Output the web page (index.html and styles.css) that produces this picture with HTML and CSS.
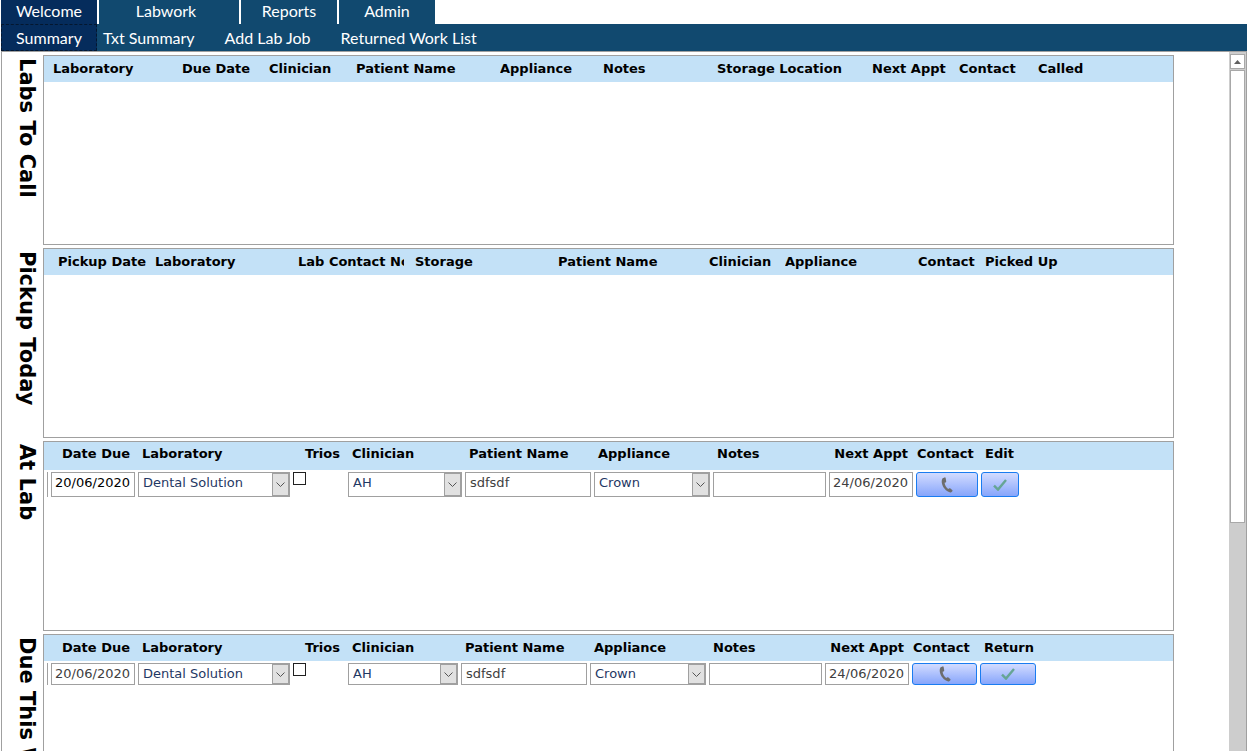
FILE: index.html
```html
<!DOCTYPE html>
<html lang="en">
<head>
  <meta charset="UTF-8">
  <meta name="viewport" content="width=device-width, initial-scale=1">
  <title>Labwork Summary</title>
  <link rel="stylesheet" href="styles.css">
</head>
<body>
  <svg width="0" height="0" class="symbols">
    <symbol id="phone" viewBox="0 0 12 16">
      <path d="M3.6 0.4 L1.6 1.2 C0 3.4 0.6 8 3.4 11.6 C5.6 14.4 8.2 15.8 10 15.4 L11.4 14.2 C11.7 13.8 11.6 13.4 11.2 13 L9.4 11.4 C9 11.1 8.5 11.1 8.1 11.4 L7.2 12 C5.2 10.6 3.8 8 3.6 5.8 L4.6 5.4 C5.1 5.2 5.3 4.8 5.2 4.3 L4.7 1.2 C4.6 0.6 4.2 0.2 3.6 0.4 Z" fill="#6d6d6d"/>
    </symbol>
    <symbol id="check" viewBox="0 0 14 12">
      <path d="M1 6.6 L5 10.6 L13 1" fill="none" stroke="#66a595" stroke-width="2.4"/>
    </symbol>
  </svg>

  <nav class="tabs">
    <button class="tab active">Welcome</button>
    <button class="tab wide">Labwork</button>
    <button class="tab">Reports</button>
    <button class="tab">Admin</button>
  </nav>
  <nav class="subtabs">
    <button class="subtab active">Summary</button>
    <button class="subtab">Txt Summary</button>
    <button class="subtab">Add Lab Job</button>
    <button class="subtab">Returned Work List</button>
  </nav>

  <main class="view">
    <div class="sections">
      <section class="section">
        <h2>Labs To Call</h2>
        <div class="panel">
          <table class="list">
            <colgroup>
              <col style="width:9px"><col style="width:129px"><col style="width:87px"><col style="width:87px"><col style="width:144px"><col style="width:103px"><col style="width:114px"><col style="width:155px"><col style="width:87px"><col style="width:79px"><col>
            </colgroup>
            <thead>
              <tr>
                <th></th><th>Laboratory</th><th>Due Date</th><th>Clinician</th><th>Patient Name</th><th>Appliance</th><th>Notes</th><th>Storage Location</th><th>Next Appt</th><th>Contact</th><th>Called</th>
              </tr>
            </thead>
          </table>
        </div>
      </section>

      <section class="section">
        <h2>Pickup Today</h2>
        <div class="panel">
          <table class="list">
            <colgroup>
              <col style="width:14px"><col style="width:97px"><col style="width:143px"><col style="width:106px"><col style="width:11px"><col style="width:143px"><col style="width:151px"><col style="width:76px"><col style="width:133px"><col style="width:67px"><col>
            </colgroup>
            <thead>
              <tr>
                <th></th><th>Pickup Date</th><th>Laboratory</th><th>Lab Contact No</th><th></th><th>Storage</th><th>Patient Name</th><th>Clinician</th><th>Appliance</th><th>Contact</th><th>Picked Up</th>
              </tr>
            </thead>
          </table>
        </div>
      </section>

      <section class="section">
        <h2>At Lab</h2>
        <div class="panel">
          <table class="list jobs tall">
            <colgroup>
              <col style="width:7px"><col style="width:87px"><col style="width:155px"><col style="width:55px"><col style="width:117px"><col style="width:129px"><col style="width:119px"><col style="width:116px"><col style="width:87px"><col style="width:65px"><col style="width:41px"><col>
            </colgroup>
            <thead>
              <tr>
                <th></th><th class="right">Date Due</th><th>Laboratory</th><th class="right">Trios</th><th>Clinician</th><th>Patient Name</th><th>Appliance</th><th>Notes</th><th class="right">Next Appt</th><th class="contact">Contact</th><th>Edit</th><th></th>
              </tr>
            </thead>
            <tbody>
              <tr>
                <td><div class="marker"></div></td>
                <td><input class="date current" type="text" value="20/06/2020" aria-label="Date Due"></td>
                <td><select aria-label="Laboratory"><option>Dental Solution</option></select></td>
                <td><input type="checkbox" aria-label="Trios"></td>
                <td><select aria-label="Clinician"><option>AH</option></select></td>
                <td><input type="text" value="sdfsdf" aria-label="Patient Name"></td>
                <td><select aria-label="Appliance"><option>Crown</option></select></td>
                <td><input type="text" aria-label="Notes"></td>
                <td><input class="date" type="text" value="24/06/2020" aria-label="Next Appt"></td>
                <td><button class="action" aria-label="Contact"><svg width="12" height="16"><use href="#phone"/></svg></button></td>
                <td><button class="action" aria-label="Edit"><svg width="14" height="12"><use href="#check"/></svg></button></td>
                <td></td>
              </tr>
            </tbody>
          </table>
        </div>
      </section>

      <section class="section">
        <h2>Due This Week</h2>
        <div class="panel">
          <table class="list jobs">
            <colgroup>
              <col style="width:7px"><col style="width:87px"><col style="width:155px"><col style="width:55px"><col style="width:113px"><col style="width:129px"><col style="width:119px"><col style="width:116px"><col style="width:87px"><col style="width:68px"><col style="width:59px"><col>
            </colgroup>
            <thead>
              <tr>
                <th></th><th class="right">Date Due</th><th>Laboratory</th><th class="right">Trios</th><th>Clinician</th><th>Patient Name</th><th>Appliance</th><th>Notes</th><th class="right">Next Appt</th><th class="contact">Contact</th><th>Return</th><th></th>
              </tr>
            </thead>
            <tbody>
              <tr>
                <td><div class="marker"></div></td>
                <td><input class="date" type="text" value="20/06/2020" aria-label="Date Due"></td>
                <td><select aria-label="Laboratory"><option>Dental Solution</option></select></td>
                <td><input type="checkbox" aria-label="Trios"></td>
                <td><select aria-label="Clinician"><option>AH</option></select></td>
                <td><input type="text" value="sdfsdf" aria-label="Patient Name"></td>
                <td><select aria-label="Appliance"><option>Crown</option></select></td>
                <td><input type="text" aria-label="Notes"></td>
                <td><input class="date" type="text" value="24/06/2020" aria-label="Next Appt"></td>
                <td><button class="action" aria-label="Contact"><svg width="12" height="16"><use href="#phone"/></svg></button></td>
                <td><button class="action" aria-label="Return"><svg width="14" height="12"><use href="#check"/></svg></button></td>
                <td></td>
              </tr>
            </tbody>
          </table>
        </div>
      </section>
    </div>

    <div class="scrollbar">
      <button class="scroll-up" aria-label="Scroll up"><svg width="7" height="4" viewBox="0 0 7 4"><path d="M0 4 L3.5 0 L7 4 Z" fill="#606060"/></svg></button>
      <div class="thumb"></div>
    </div>
  </main>
</body>
</html>
```

FILE: styles.css
```css
* {
  box-sizing: border-box;
}
body {
  display: flex;
  flex-direction: column;
  height: 100vh;
  margin: 0;
  padding: 0 8px 0 1px;
  overflow: hidden;
  background: white;
  color: black;
  font-family: Verdana, "DejaVu Sans", sans-serif;
  font-size: 13px;
}
.symbols {
  position: absolute;
}
button, input, select {
  margin: 0;
  font: inherit;
}

/* navigation */
.tabs {
  display: flex;
  flex: none;
  gap: 2px;
}
.subtabs {
  display: flex;
  flex: none;
  background: #11496f;
}
.tab, .subtab {
  border: 0;
  padding: 0;
  background: #11496f;
  color: white;
  font-family: Lato, "Century Gothic", sans-serif;
  font-size: 16px;
  line-height: 20px;
}
.tab {
  width: 96px;
  height: 24px;
  padding-bottom: 3px;
}
.tab.wide {
  width: 140px;
  padding-right: 6px;
}
.subtab {
  height: 27px;
  padding: 0 24px 0 6px;
}
.tab.active, .subtab.active {
  background: #052c5c;
}
.subtab.active {
  width: 96px;
  padding: 0;
  border: 1px dashed #04172f;
}

/* scrolling view */
.view {
  display: flex;
  flex: 1;
  min-height: 0;
  border: 1px solid #a0a0a0;
  border-bottom: 0;
}
.sections {
  display: flex;
  flex: 1;
  flex-direction: column;
  gap: 3px;
  padding: 3px 55px 0 0;
  overflow: hidden;
}
.section {
  display: flex;
  flex: none;
}
h2 {
  width: 41px;
  height: 189px;
  margin: 0;
  padding: 3px 4px 0 0;
  font-size: 21px;
  line-height: 24px;
  white-space: nowrap;
  writing-mode: vertical-rl;
}
.panel {
  flex: 1;
  min-height: 190px;
  border: 1px solid #a0a0a0;
}

/* lists */
.list {
  width: 100%;
  table-layout: fixed;
  border-collapse: collapse;
}
th {
  height: 26px;
  padding: 0 0 1px;
  overflow: hidden;
  background: #c3e1f7;
  text-align: left;
  line-height: 16px;
  white-space: nowrap;
}
.jobs th {
  padding-left: 4px;
}
.jobs th.contact {
  padding-left: 1px;
}
.jobs th.right {
  padding-right: 8px;
  padding-left: 0;
  text-align: right;
}
.tall th {
  height: 28px;
  padding-bottom: 4px;
}
td {
  padding: 2px 3px 0 0;
  vertical-align: top;
}
td input[type="text"], td select, .action {
  display: block;
  width: 100%;
  height: 22px;
  border: 1px solid #a0a0a0;
  border-radius: 0;
  background: white;
}
td input[type="text"] {
  padding: 0 4px 1px;
  color: #404040;
}
td input.date {
  padding-right: 4px;
  padding-left: 3px;
  text-align: right;
}
td input.current {
  color: black;
}
td select {
  appearance: none;
  padding: 0 18px 1px 4px;
  background:
    url("data:image/svg+xml,%3Csvg xmlns='http://www.w3.org/2000/svg' width='9' height='5'%3E%3Cpath d='M.5 .5 4.5 4.5 8.5 .5' fill='none' stroke='%23555'/%3E%3C/svg%3E") right 4px center no-repeat,
    linear-gradient(#e1e1e1, #e1e1e1) right 1px center / 15px calc(100% - 2px) no-repeat,
    linear-gradient(#a0a0a0, #a0a0a0) right center / 17px 100% no-repeat,
    white;
  color: #1f3864;
}
.tall td input[type="text"], .tall td select, .tall .action {
  height: 25px;
}
.tall td input[type="text"], .tall td select {
  padding-bottom: 4px;
}
td input[type="checkbox"] {
  display: block;
  appearance: none;
  width: 13px;
  height: 13px;
  border: 1px solid #202020;
  background: white;
}
.marker {
  width: 1px;
  height: 22px;
  margin-left: 3px;
  background: #a0a0a0;
}
.tall .marker {
  height: 25px;
}
td .action {
  display: flex;
  align-items: center;
  justify-content: center;
  padding: 0;
  border: 1px solid #1a7cf0;
  border-radius: 3px;
  background: linear-gradient(#d3dcff, #87a5fb);
}

/* scrollbar */
.scrollbar {
  display: flex;
  flex: none;
  flex-direction: column;
  gap: 1px;
  width: 17px;
  padding: 2px 1px 0;
  background: #cdcdcd;
}
.scroll-up {
  display: flex;
  align-items: center;
  justify-content: center;
  height: 15px;
  padding: 0;
  border: 1px solid #a8a8a8;
  background: white;
}
.thumb {
  height: 65%;
  border: 1px solid #a8a8a8;
  background: white;
}
```
